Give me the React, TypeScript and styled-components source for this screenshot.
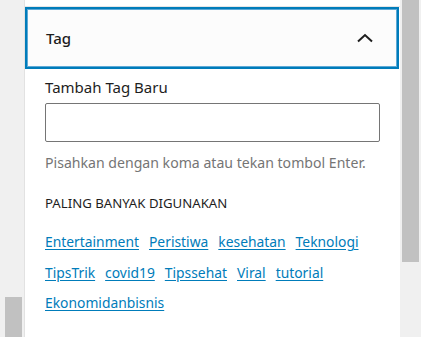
import React from 'react';
import styled, { createGlobalStyle } from 'styled-components';

const GlobalStyle = createGlobalStyle`
  html, body {
    margin: 0;
    padding: 0;
    background: #ffffff;
    overflow: hidden;
  }
  * {
    box-sizing: border-box;
  }
`;

const Frame = styled.div`
  display: flex;
  width: 421px;
  height: 337px;
  font-family: 'Noto Sans', 'Open Sans', sans-serif;
  color: #1e1e1e;
`;

// left strip is the edge of the neighbouring scroll area
const Gutter = styled.div`
  width: 25px;
  background: #f0f0f0;
  border-right: 1px solid #e2e2e2;
  display: flex;
  flex-direction: column;
  justify-content: flex-end;
  padding-left: 5px;
`;

const GutterThumb = styled.div`
  width: 17px;
  height: 40px;
  background: #c1c1c1;
`;

const Panel = styled.div`
  width: 375px;
  background: #ffffff;
  display: flex;
  flex-direction: column;
`;

const TopStrip = styled.div`
  height: 7px;
  border-bottom: 1px solid #e6e6e6;
`;

const Header = styled.button`
  height: 62px;
  margin: 0 1px 0 0;
  border: 2px solid #007cba;
  box-shadow: inset 0 0 0 1px #5ea9d6;
  background: #fcfcfc;
  display: flex;
  align-items: center;
  justify-content: space-between;
  padding: 0 24px 0 19px;
  font-family: inherit;
  font-size: 15px;
  font-weight: 500;
  color: #1e1e1e;
  cursor: pointer;
`;

const Body = styled.div`
  padding: 7px 20px 0 20px;
  display: flex;
  flex-direction: column;
`;

const Label = styled.label`
  font-size: 15px;
  line-height: 22px;
  color: #1e1e1e;
  margin-bottom: 5px;
`;

const Input = styled.input`
  width: 335px;
  height: 39px;
  border: 1px solid #757575;
  border-radius: 2px;
  background: #fff;
  font-family: inherit;
  font-size: 14px;
  outline: none;
`;

const Help = styled.p`
  margin: 12px 0 0 0;
  font-size: 14.1px;
  line-height: 18px;
  color: #757575;
`;

const SectionTitle = styled.h3`
  margin: 23px 0 0 0;
  font-size: 13.2px;
  line-height: 16px;
  font-weight: 400;
  text-transform: uppercase;
  color: #1e1e1e;
`;

const TagList = styled.div`
  display: flex;
  flex-wrap: wrap;
  column-gap: 10px;
  row-gap: 0.5px;
  margin-top: 16px;
  max-width: 340px;
`;

const TagLink = styled.a`
  font-size: 13.85px;
  line-height: 30px;
  color: #007cba;
  text-decoration: underline;
  text-underline-offset: 2px;
`;

const RightBar = styled.div`
  width: 21px;
  background: #f0f0f0;
  padding: 0 2px;
`;

const RightThumb = styled.div`
  width: 17px;
  height: 262px;
  background: #c1c1c1;
`;

const ChevronUp = () => (
  <svg width="16" height="10" viewBox="0 0 16 10" aria-hidden="true">
    <polyline points="1,8.5 8,2 15,8.5" fill="none" stroke="#1e1e1e" strokeWidth="2" />
  </svg>
);

const tags = [
  'Entertainment',
  'Peristiwa',
  'kesehatan',
  'Teknologi',
  'TipsTrik',
  'covid19',
  'Tipssehat',
  'Viral',
  'tutorial',
  'Ekonomidanbisnis',
];

export default function App() {
  return (
    <>
      <GlobalStyle />
      <Frame>
        <Gutter>
          <GutterThumb />
        </Gutter>
        <Panel>
          <TopStrip />
          <Header type="button" aria-expanded="true">
            <span>Tag</span>
            <ChevronUp />
          </Header>
          <Body>
            <Label htmlFor="tag-input">Tambah Tag Baru</Label>
            <Input id="tag-input" type="text" />
            <Help>Pisahkan dengan koma atau tekan tombol Enter.</Help>
            <SectionTitle>Paling banyak digunakan</SectionTitle>
            <TagList>
              {tags.map(t => (
                <TagLink key={t} href="#">{t}</TagLink>
              ))}
            </TagList>
          </Body>
        </Panel>
        <RightBar>
          <RightThumb />
        </RightBar>
      </Frame>
    </>
  );
}
